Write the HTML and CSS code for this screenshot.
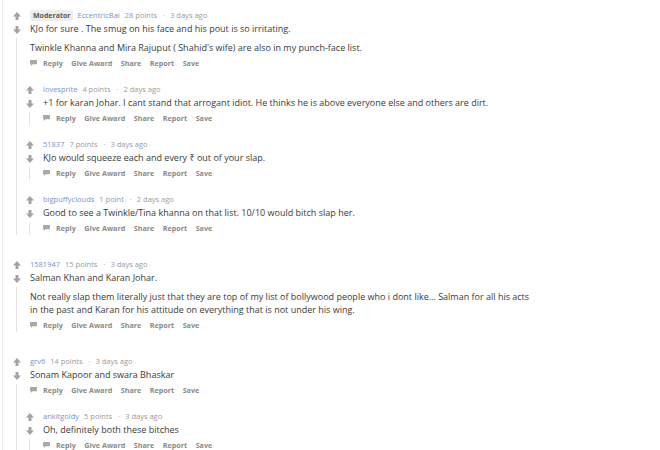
FILE: index.html
```html
<!DOCTYPE html>
<html>
<head>
<meta charset="utf-8">
<link rel="stylesheet" href="styles.css">
</head>
<body>
<div class="page">

  <div class="comment top first">
    <div class="votes">
      <svg class="arrow" viewBox="0 0 8 8"><path d="M4 0 L8 4.5 H5.5 V8 H2.5 V4.5 H0 Z"/></svg>
      <svg class="arrow" viewBox="0 0 8 8"><path d="M4 8 L8 3.5 H5.5 V0 H2.5 V3.5 H0 Z"/></svg>
      <div class="thread"></div>
    </div>
    <div class="main">
      <div class="meta"><span class="badge">Moderator</span><span class="user">EccentricBai</span><span>28 points</span><span class="dot">·</span><span>3 days ago</span></div>
      <div class="body">
        <p>KJo for sure . The smug on his face and his pout is so irritating.</p>
        <p>Twinkle Khanna and Mira Rajuput ( Shahid's wife) are also in my punch-face list.</p>
      </div>
      <div class="actions"><svg class="bubble" viewBox="0 0 8 7"><path d="M0 0 H8 V5 H3 L1 7 V5 H0 Z"/></svg><span>Reply</span><span>Give Award</span><span>Share</span><span>Report</span><span>Save</span></div>

      <div class="children">
        <div class="comment child">
          <div class="votes">
            <svg class="arrow" viewBox="0 0 8 8"><path d="M4 0 L8 4.5 H5.5 V8 H2.5 V4.5 H0 Z"/></svg>
            <svg class="arrow" viewBox="0 0 8 8"><path d="M4 8 L8 3.5 H5.5 V0 H2.5 V3.5 H0 Z"/></svg>
            <div class="thread"></div>
          </div>
          <div class="main">
            <div class="meta"><span class="user">lovesprite</span><span>4 points</span><span class="dot">·</span><span>2 days ago</span></div>
            <div class="body"><p>+1 for karan Johar. I cant stand that arrogant idiot. He thinks he is above everyone else and others are dirt.</p></div>
            <div class="actions"><svg class="bubble" viewBox="0 0 8 7"><path d="M0 0 H8 V5 H3 L1 7 V5 H0 Z"/></svg><span>Reply</span><span>Give Award</span><span>Share</span><span>Report</span><span>Save</span></div>
          </div>
        </div>

        <div class="comment child">
          <div class="votes">
            <svg class="arrow" viewBox="0 0 8 8"><path d="M4 0 L8 4.5 H5.5 V8 H2.5 V4.5 H0 Z"/></svg>
            <svg class="arrow" viewBox="0 0 8 8"><path d="M4 8 L8 3.5 H5.5 V0 H2.5 V3.5 H0 Z"/></svg>
            <div class="thread"></div>
          </div>
          <div class="main">
            <div class="meta"><span class="user">51837</span><span>7 points</span><span class="dot">·</span><span>3 days ago</span></div>
            <div class="body"><p>KJo would squeeze each and every ₹ out of your slap.</p></div>
            <div class="actions"><svg class="bubble" viewBox="0 0 8 7"><path d="M0 0 H8 V5 H3 L1 7 V5 H0 Z"/></svg><span>Reply</span><span>Give Award</span><span>Share</span><span>Report</span><span>Save</span></div>
          </div>
        </div>

        <div class="comment child">
          <div class="votes">
            <svg class="arrow" viewBox="0 0 8 8"><path d="M4 0 L8 4.5 H5.5 V8 H2.5 V4.5 H0 Z"/></svg>
            <svg class="arrow" viewBox="0 0 8 8"><path d="M4 8 L8 3.5 H5.5 V0 H2.5 V3.5 H0 Z"/></svg>
            <div class="thread"></div>
          </div>
          <div class="main">
            <div class="meta"><span class="user">bigpuffyclouds</span><span>1 point</span><span class="dot">·</span><span>2 days ago</span></div>
            <div class="body"><p>Good to see a Twinkle/Tina khanna on that list. 10/10 would bitch slap her.</p></div>
            <div class="actions"><svg class="bubble" viewBox="0 0 8 7"><path d="M0 0 H8 V5 H3 L1 7 V5 H0 Z"/></svg><span>Reply</span><span>Give Award</span><span>Share</span><span>Report</span><span>Save</span></div>
          </div>
        </div>
      </div>
    </div>
  </div>

  <div class="comment top">
    <div class="votes">
      <svg class="arrow" viewBox="0 0 8 8"><path d="M4 0 L8 4.5 H5.5 V8 H2.5 V4.5 H0 Z"/></svg>
      <svg class="arrow" viewBox="0 0 8 8"><path d="M4 8 L8 3.5 H5.5 V0 H2.5 V3.5 H0 Z"/></svg>
      <div class="thread"></div>
    </div>
    <div class="main">
      <div class="meta"><span class="user">1581947</span><span>15 points</span><span class="dot">·</span><span>3 days ago</span></div>
      <div class="body">
        <p>Salman Khan and Karan Johar.</p>
        <p>Not really slap them literally just that they are top of my list of bollywood people who i dont like... Salman for all his acts in the past and Karan for his attitude on everything that is not under his wing.</p>
      </div>
      <div class="actions"><svg class="bubble" viewBox="0 0 8 7"><path d="M0 0 H8 V5 H3 L1 7 V5 H0 Z"/></svg><span>Reply</span><span>Give Award</span><span>Share</span><span>Report</span><span>Save</span></div>
    </div>
  </div>

  <div class="comment top">
    <div class="votes">
      <svg class="arrow" viewBox="0 0 8 8"><path d="M4 0 L8 4.5 H5.5 V8 H2.5 V4.5 H0 Z"/></svg>
      <svg class="arrow" viewBox="0 0 8 8"><path d="M4 8 L8 3.5 H5.5 V0 H2.5 V3.5 H0 Z"/></svg>
      <div class="thread"></div>
    </div>
    <div class="main">
      <div class="meta"><span class="user">grv6</span><span>14 points</span><span class="dot">·</span><span>3 days ago</span></div>
      <div class="body"><p>Sonam Kapoor and swara Bhaskar</p></div>
      <div class="actions"><svg class="bubble" viewBox="0 0 8 7"><path d="M0 0 H8 V5 H3 L1 7 V5 H0 Z"/></svg><span>Reply</span><span>Give Award</span><span>Share</span><span>Report</span><span>Save</span></div>

      <div class="children">
        <div class="comment child">
          <div class="votes">
            <svg class="arrow" viewBox="0 0 8 8"><path d="M4 0 L8 4.5 H5.5 V8 H2.5 V4.5 H0 Z"/></svg>
            <svg class="arrow" viewBox="0 0 8 8"><path d="M4 8 L8 3.5 H5.5 V0 H2.5 V3.5 H0 Z"/></svg>
            <div class="thread"></div>
          </div>
          <div class="main">
            <div class="meta"><span class="user">ankitgoldy</span><span>5 points</span><span class="dot">·</span><span>3 days ago</span></div>
            <div class="body"><p>Oh, definitely both these bitches</p></div>
            <div class="actions"><svg class="bubble" viewBox="0 0 8 7"><path d="M0 0 H8 V5 H3 L1 7 V5 H0 Z"/></svg><span>Reply</span><span>Give Award</span><span>Share</span><span>Report</span><span>Save</span></div>
          </div>
        </div>
      </div>
    </div>
  </div>

</div>
</body>
</html>
```

FILE: styles.css
```css
html, body {
  margin: 0;
  padding: 0;
  background: #ffffff;
}

body {
  font-family: "Open Sans", "Noto Sans", sans-serif;
  width: 660px;
  height: 450px;
  overflow: hidden;
}

.page {
  border-left: 1px solid #ececec;
  margin-left: 2px;
  padding-top: 8px;
  height: 100%;
  box-sizing: border-box;
}

.comment {
  display: grid;
  grid-template-columns: 27px 1fr;
}

.comment.top + .comment.top {
  margin-top: 22px;
}

.comment.child {
  margin-left: -14px;
  margin-top: 12px;
}

.votes {
  display: flex;
  flex-direction: column;
  align-items: center;
  padding-top: 4px;
}

.arrow {
  width: 8px;
  height: 8px;
  fill: #a3a3a3;
  display: block;
}

.arrow + .arrow {
  margin-top: 6px;
}

.thread {
  flex: 1;
  width: 1px;
  background: #e3e3e3;
  margin-top: 4px;
}

.main {
  min-width: 0;
}

.meta {
  height: 14px;
  line-height: 14px;
  font-size: 7.5px;
  color: #9b9b9b;
  display: flex;
  align-items: center;
  white-space: nowrap;
}

.meta > span {
  margin-right: 5px;
}

.meta .dot {
  margin: 0 5px 0 1px;
}

.badge {
  background: #ededed;
  color: #5a5a5a;
  font-weight: 700;
  font-size: 7px;
  padding: 0 3px;
  line-height: 11px;
  border-radius: 2px;
}

.meta > .badge {
  margin-right: 4px;
}

.user {
  color: #7b93c9;
}

.body {
  font-size: 9px;
  color: #3a3a3a;
  max-width: 506px;
}

.body p {
  margin: 0;
  line-height: 13px;
}

.body p + p {
  margin-top: 6px;
}

.actions {
  margin-top: 2px;
  height: 14px;
  display: flex;
  align-items: center;
  font-size: 7.2px;
  font-weight: 700;
  color: #8a8a8a;
  white-space: nowrap;
}

.bubble {
  width: 7px;
  height: 6px;
  fill: #a8a8a8;
  margin-right: 6px;
}

.actions span {
  margin-right: 8.5px;
}
```
